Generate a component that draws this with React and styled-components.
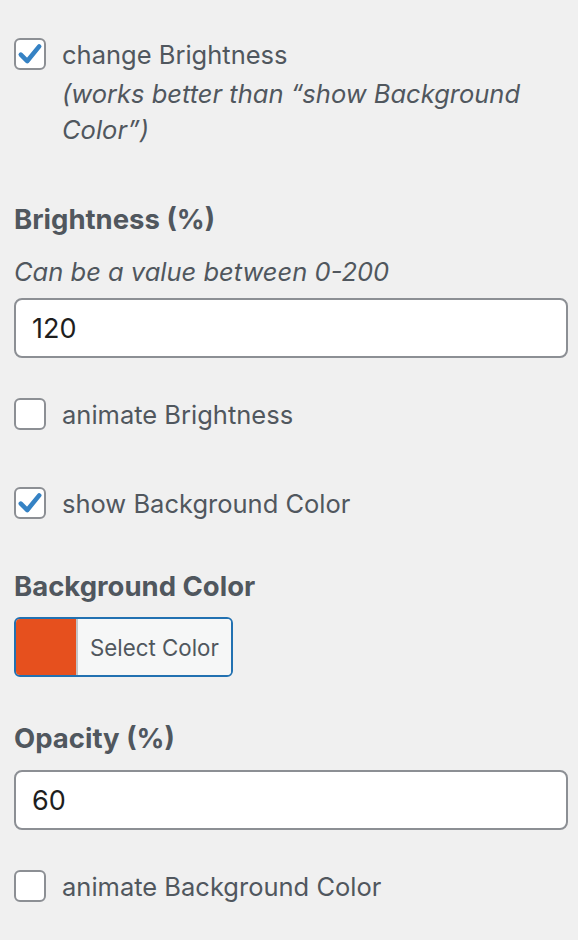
import React from "react";
import styled, { createGlobalStyle } from "styled-components";

const GlobalStyle = createGlobalStyle`
  html, body {
    margin: 0;
    padding: 0;
    background: #f0f0f0;
  }
  body {
    font-family: Inter, "Noto Sans", sans-serif;
    color: #50575e;
  }
`;

const Panel = styled.div`
  padding: 38px 10px 20px 14px;
  display: flex;
  flex-direction: column;
`;

const CheckRow = styled.label`
  display: flex;
  align-items: flex-start;
  gap: 16px;
  margin-bottom: ${(p) => p.$mb || 0}px;
`;

const Box = styled.span`
  flex: none;
  width: 32px;
  height: 32px;
  box-sizing: border-box;
  border: 2px solid #8c8f94;
  border-radius: 6px;
  background: #fff;
  display: flex;
  align-items: center;
  justify-content: center;
`;

const CheckText = styled.div`
  font-size: 25.5px;
  line-height: 34px;
  color: #50575e;
`;

const Help = styled.div`
  font-style: italic;
  font-size: 25.5px;
  line-height: 36px;
  color: #50575e;
  margin-top: ${(p) => p.$mt || 0}px;
`;

const Heading = styled.div`
  font-weight: 700;
  font-size: 27.5px;
  line-height: 34px;
  color: #50575e;
  margin-top: ${(p) => p.$mt || 0}px;
  margin-bottom: ${(p) => p.$mb || 0}px;
`;

const Input = styled.div`
  box-sizing: border-box;
  height: 60px;
  border: 2px solid #8c8f94;
  border-radius: 8px;
  background: #fff;
  padding: 0 16px;
  display: flex;
  align-items: center;
  font-size: 27px;
  color: #1e1e1e;
  margin-top: ${(p) => p.$mt || 0}px;
  margin-bottom: ${(p) => p.$mb || 0}px;
`;

const ColorButton = styled.div`
  box-sizing: border-box;
  width: 219px;
  height: 60px;
  border: 2px solid #2271b1;
  border-radius: 6px;
  display: flex;
  overflow: hidden;
  margin-bottom: ${(p) => p.$mb || 0}px;
`;

const Swatch = styled.span`
  width: 60px;
  background: ${(p) => p.$color};
  border-right: 2px solid #c3c4c7;
`;

const SwatchLabel = styled.span`
  flex: 1;
  background: #f6f7f7;
  display: flex;
  align-items: center;
  padding-left: 12px;
  font-size: 22.3px;
  color: #50575e;
`;

const Check = () => (
  <svg width="26" height="26" viewBox="0 0 24 24">
    <path
      d="M3.5 12.5 L9.5 18.5 L20.5 5"
      fill="none"
      stroke="#3582c4"
      strokeWidth="4.2"
      strokeLinecap="round"
      strokeLinejoin="round"
    />
  </svg>
);

const Checkbox = ({ checked, children, mb }) => (
  <CheckRow $mb={mb}>
    <Box>{checked && <Check />}</Box>
    <div>{children}</div>
  </CheckRow>
);

export default function App() {
  return (
    <Panel>
      <GlobalStyle />
      <Checkbox checked mb={54}>
        <CheckText>change Brightness</CheckText>
        <Help $mt={4}>
          (works better than “show Background
          <br />
          Color”)
        </Help>
      </Checkbox>
      <Heading $mb={18}>Brightness (%)</Heading>
      <Help>Can be a value between 0-200</Help>
      <Input $mt={8} $mb={40}>120</Input>
      <Checkbox mb={55}>
        <CheckText>animate Brightness</CheckText>
      </Checkbox>
      <Checkbox checked mb={48}>
        <CheckText>show Background Color</CheckText>
      </Checkbox>
      <Heading $mb={14}>Background Color</Heading>
      <ColorButton $mb={44}>
        <Swatch $color="#e6501e" />
        <SwatchLabel>Select Color</SwatchLabel>
      </ColorButton>
      <Heading $mb={15}>Opacity (%)</Heading>
      <Input $mb={40}>60</Input>
      <Checkbox>
        <CheckText>animate Background Color</CheckText>
      </Checkbox>
    </Panel>
  );
}
